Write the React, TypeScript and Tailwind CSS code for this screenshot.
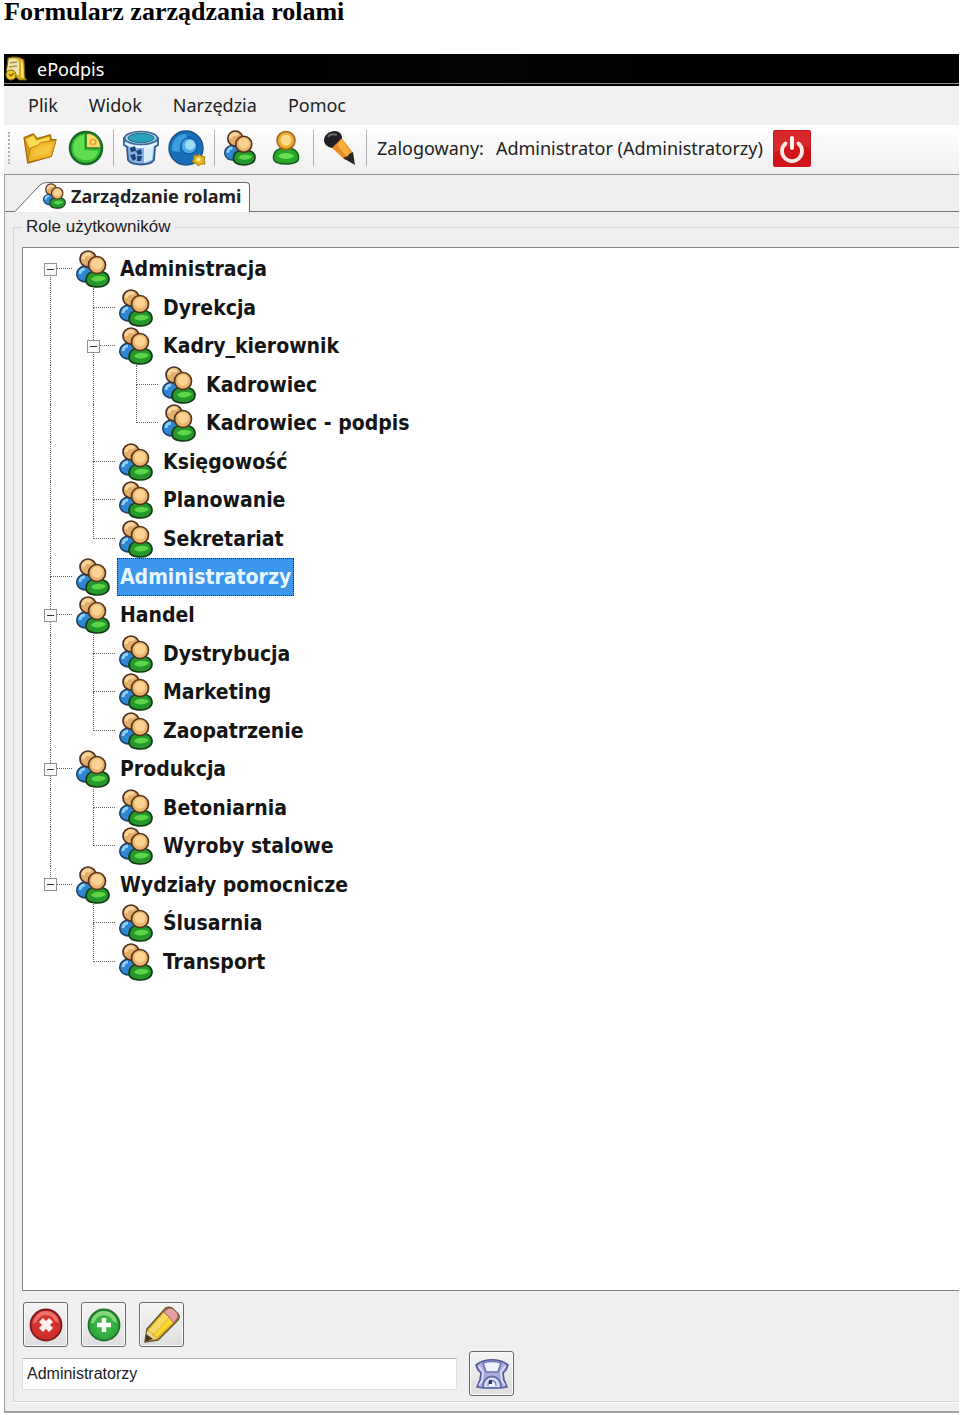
import React, { useState } from "react";

type RoleNode = { name: string; children?: RoleNode[] };

const roles: RoleNode[] = [
  {
    name: "Administracja",
    children: [
      { name: "Dyrekcja" },
      { name: "Kadry_kierownik", children: [{ name: "Kadrowiec" }, { name: "Kadrowiec - podpis" }] },
      { name: "Księgowość" },
      { name: "Planowanie" },
      { name: "Sekretariat" },
    ],
  },
  { name: "Administratorzy" },
  { name: "Handel", children: [{ name: "Dystrybucja" }, { name: "Marketing" }, { name: "Zaopatrzenie" }] },
  { name: "Produkcja", children: [{ name: "Betoniarnia" }, { name: "Wyroby stalowe" }] },
  { name: "Wydziały pomocnicze", children: [{ name: "Ślusarnia" }, { name: "Transport" }] },
];

type Row = { name: string; guides: boolean[]; first: boolean; last: boolean; parent: boolean };

// Turns the role hierarchy into rows; guides tells which ancestor lines pass through a row.
function flatten(nodes: RoleNode[], guides: boolean[] = []): Row[] {
  return nodes.flatMap((node, i) => {
    const last = i === nodes.length - 1;
    const first = i === 0 && guides.length === 0;
    return [
      { name: node.name, guides, first, last, parent: !!node.children },
      ...flatten(node.children ?? [], [...guides, !last]),
    ];
  });
}

const rows = flatten(roles);

function PeopleIcon({ className }: { className: string }) {
  return (
    <svg viewBox="0 0 34 38" className={className} aria-hidden="true">
      <path d="M1 26c-1-5 2-9 8-10l9 4v11l-7 1C6 32 2 30 1 26Z" fill="#2f86d2" stroke="#1c3f66" strokeWidth="1.500" />
      <path d="M4 24c0-3 2-5 5-5" stroke="#8fd0fb" strokeWidth="3" fill="none" />
      <circle cx="12" cy="9" r="8" fill="#e5ad69" stroke="#4a3020" strokeWidth="1.700" />
      <path d="M7 9c0-4 4-6 8-4" stroke="#f9d59c" strokeWidth="3.500" fill="none" />
      <path d="M10 30c0-6 5-9 12-9 6 0 11 3 11 8 0 5-5 8-11 8-7 0-12-2-12-7Z" fill="#25982b" stroke="#153c17" strokeWidth="1.700" />
      <path d="M15 29c3-4 11-4 15-1-3 4-11 5-15 1Z" fill="#5cd548" />
      <circle cx="21" cy="15" r="8.500" fill="#ebb36c" stroke="#543620" strokeWidth="1.700" />
      <circle cx="21" cy="14" r="5.500" fill="#fad392" />
    </svg>
  );
}

function PersonIcon() {
  return (
    <svg viewBox="0 0 28 36" className="h-9 w-7" aria-hidden="true">
      <path d="M1.500 28c0-6 4-10 12.500-10s12.500 4 12.500 10c0 4-5 6-12.500 6S1.500 32 1.500 28Z" fill="#28a72c" stroke="#17631a" strokeWidth="1.600" />
      <path d="M6 26c3-4 13-4 16 0-3 4-13 4-16 0Z" fill="#69df51" />
      <circle cx="14" cy="10.500" r="9" fill="#eba936" stroke="#a06215" strokeWidth="1.500" />
      <circle cx="14" cy="10" r="5.500" fill="#fbdc87" />
    </svg>
  );
}

function FolderIcon() {
  return (
    <svg viewBox="0 0 36 34" className="h-8 w-9" aria-hidden="true">
      <path d="M1 6 11 2l4 5 14-4 1 5 5 0-5 18L5 33Z" fill="#d89a12" stroke="#9a6a0c" strokeWidth="1.300" strokeLinejoin="round" />
      <path d="M3 8 11 4l3 5 14-4v6L7 17Z" fill="#fbdc57" />
      <path d="m8 17 8-3 3-3 16-2-5 17L5 32Z" fill="#efb92c" stroke="#b67c0c" strokeWidth="1" strokeLinejoin="round" />
      <path d="m10 26 4-9 17-4-4 10Z" fill="#f5c640" />
    </svg>
  );
}

function PieIcon() {
  return (
    <svg viewBox="0 0 36 36" className="size-9" aria-hidden="true">
      <circle cx="18" cy="18" r="16" fill="#33bd32" stroke="#196a20" strokeWidth="2.500" />
      <path d="M5 20C5 11 9 6 16 5v15l14 1C28 34 7 33 5 20Z" fill="#5fdf50" />
      <path d="M18 3v15h15C33 9 27 3 18 3Z" fill="#f1dd67" stroke="#37792a" strokeWidth="1.700" />
      <circle cx="25" cy="12" r="3.500" fill="#e9a637" />
      <circle cx="25" cy="12" r="1.500" fill="#fff1a0" />
    </svg>
  );
}

function BinIcon() {
  return (
    <svg viewBox="0 0 36 36" className="size-9" aria-hidden="true">
      <path d="M1 8v7l3 2 1 13c4 6 22 6 26 0l1-13 3-2V8Z" fill="#83b4df" stroke="#315b91" strokeWidth="1.800" />
      <path d="m21 17 10-2-2 15-8 3Z" fill="#d7edfb" />
      <ellipse cx="18" cy="8" rx="16.500" ry="6.500" fill="#a5d4e8" stroke="#3e6793" strokeWidth="1.600" />
      <ellipse cx="18" cy="8" rx="13" ry="4.500" fill="#28a2bd" stroke="#246987" strokeWidth="1" />
      <path d="M2 13c8 5 24 5 32 0" stroke="#e8f7ff" strokeWidth="2.500" fill="none" />
      <path d="m7 18 5-2 1 5-5 1Zm6 3 5-2 1 5-4 1Zm-6 4 5-1 1 5-3 2Zm7 1 5 0-1 5h-4Z" fill="#213f79" />
    </svg>
  );
}

function DiscIcon() {
  return (
    <svg viewBox="0 0 38 36" className="h-9 w-[38px]" aria-hidden="true">
      <circle cx="18" cy="18" r="17" fill="#176fb9" stroke="#1b518d" strokeWidth="1.400" />
      <path d="M4 21C3 11 9 4 18 4l2 7c-6 1-9 5-8 11Z" fill="#3b9dde" />
      <circle cx="21" cy="16" r="8" fill="#4eafe9" stroke="#145da6" strokeWidth="1.500" />
      <circle cx="22" cy="15" r="5" fill="#a0dcf7" />
      <path d="m31 24 2 2 4 1-1 3 1 4-4 0-3 2-2-3-4-1 2-3 0-4 4 1Z" fill="#e5b723" stroke="#a87808" strokeWidth="1" />
      <circle cx="30.500" cy="29.500" r="2" fill="#fff0a0" />
    </svg>
  );
}

function MarkerIcon() {
  return (
    <svg viewBox="0 0 34 36" className="h-9 w-[34px]" aria-hidden="true">
      <path d="M8 17 18 7l12 16-8 7Z" fill="#ea8c1d" />
      <path d="m14 15 5-6 9 14-4 4Z" fill="#f9ad43" />
      <path d="M1 10C1 5 6 1 12 1c4 0 7 3 7 7L9 18C4 17 1 14 1 10Z" fill="#202025" />
      <path d="M5 7c2-3 6-3 9-2" stroke="#696a73" strokeWidth="2" fill="none" />
      <path d="m20 28 5-2 1-2 4-2 2 13Z" fill="#2d2520" />
    </svg>
  );
}

function ScrollIcon() {
  return (
    <svg viewBox="0 0 24 26" className="h-[26px] w-6" aria-hidden="true">
      <path d="M4 2c5-2 13-1 16 2l1 18 2 2h-8l-3-3-6 3-4-5Z" fill="#d3aa28" stroke="#6d5412" strokeWidth="1" />
      <path d="M5 3c4-1 10-1 10 4v12H6L3 14Z" fill="#f0e4aa" />
      <path d="m6 7 7-1M5 11l8-1" stroke="#a99950" strokeWidth="1.500" />
      <path d="M17 4c3 2 2 12 3 18l-3-1Z" fill="#ffe656" />
      <circle cx="7" cy="19" r="5" fill="#edca29" stroke="#84670f" strokeWidth="1" />
      <path d="m5 18 2 2 3-3" stroke="#8d6b0a" strokeWidth="1.500" fill="none" />
    </svg>
  );
}

function PowerIcon() {
  return (
    <svg viewBox="0 0 38 37" className="h-[37px] w-[38px]" aria-hidden="true">
      <rect width="38" height="37" rx="2" fill="#cf1519" />
      <path d="M1 1h36v17C24 14 12 16 1 24Z" fill="#d8282b" />
      <path d="M12.500 13.500a10 10 0 1 0 13 0" stroke="#fce9e5" strokeWidth="3.800" fill="none" strokeLinecap="round" />
      <path d="M19 8v10" stroke="#fff4f0" strokeWidth="4" strokeLinecap="round" />
    </svg>
  );
}

function RoundIcon({ kind }: { kind: "delete" | "add" }) {
  const red = kind === "delete";
  return (
    <svg viewBox="0 0 34 34" className="size-[34px]" aria-hidden="true">
      <circle cx="17" cy="17" r="15.500" fill={red ? "#ce302b" : "#30aa3c"} stroke={red ? "#801817" : "#20702b"} strokeWidth="1.800" />
      <path d="M4 16C5 7 11 3 17 3s12 4 13 12c-7-4-18-3-26 1Z" fill={red ? "#ec7167" : "#85d77c"} />
      <circle cx="17" cy="17" r="10" fill={red ? "#d6342e" : "#39b443"} />
      {red ? (
        <path d="m12 12 10 10m0-10-10 10" stroke="#fff5ee" strokeWidth="5.500" />
      ) : (
        <path d="M17 10v14m-7-7h14" stroke="#fbfff6" strokeWidth="4.500" />
      )}
    </svg>
  );
}

function PencilIcon() {
  return (
    <svg viewBox="0 0 38 38" className="size-[38px]" aria-hidden="true">
      <path d="M2 36 4 23 21 4c2-3 5-3 8-2l6 6c2 2 1 5-1 7L15 34Z" fill="#dfb32b" stroke="#6b5522" strokeWidth="1.600" strokeLinejoin="round" />
      <path d="M6 24 21 7l5 4L11 28Z" fill="#f4d967" />
      <path d="M11 29 27 11l4 4-17 16Z" fill="#fbd82f" />
      <path d="m21 6 5-4c3-1 10 5 9 9l-4 6-4-5Z" fill="#e5a3a5" stroke="#96605c" strokeWidth="1" />
      <path d="m4 25 4 1 2 4 4 2-12 4Z" fill="#e9cf91" />
      <path d="m2 36 1-8 7 5Z" fill="#463718" />
    </svg>
  );
}

function SaveIcon() {
  return (
    <svg viewBox="0 0 34 34" className="size-[34px]" aria-hidden="true">
      <path d="M1 8C10 1 24 1 33 8l-2 5-3 3 1 7 3 7-7 1H9l-7-1 3-7 1-7-3-3Z" fill="#a9aedd" stroke="#525b96" strokeWidth="1.700" strokeLinejoin="round" />
      <path d="M8 6c5-2 13-2 18 0l-3 9H11Z" fill="#f0f2ff" stroke="#6d75b0" strokeWidth="1.600" />
      <path d="M8 30c0-14 18-14 18 0" fill="#dce0fa" stroke="#656da8" strokeWidth="2" />
      <path d="M13 29c0-7 8-7 8 0" fill="#f4f5ff" stroke="#7980bb" strokeWidth="1.300" />
      <path d="M14 23h3v4h-3Z" fill="#31376e" />
      <path d="m4 9 4 6-1 9-3 4m26-19-4 6 1 9 3 4" stroke="#e3e6fa" strokeWidth="1.500" fill="none" />
    </svg>
  );
}

function Divider() {
  return <span className="h-9 w-px bg-[#b4b4b8]" />;
}

function ToolButton({ label, className = "", children }: { label: string; className?: string; children: React.ReactNode }) {
  return (
    <button type="button" aria-label={label} className={`flex shrink-0 items-center justify-center ${className}`}>
      {children}
    </button>
  );
}

function FrameButton({ label, children }: { label: string; children: React.ReactNode }) {
  return (
    <button
      type="button"
      aria-label={label}
      className="flex size-[45px] shrink-0 items-center justify-center rounded-[3px] border border-[#69696d] bg-linear-to-b from-[#f5f5f5] to-[#dedee0] shadow-[inset_0_0_0_1px_#fafafa]"
    >
      {children}
    </button>
  );
}

function TreeRow({ row, selected, onSelect }: { row: Row; selected: boolean; onSelect: () => void }) {
  return (
    <li role="treeitem" aria-level={row.guides.length + 1} aria-selected={selected} className="flex min-h-0">
      {row.guides.map((on, i) => (
        <span key={i} className="grid w-[43px] shrink-0 grid-cols-[21px_22px]">
          <span className={`col-start-2 border-dotted border-[#666] ${on ? "border-l" : ""}`} />
        </span>
      ))}
      <span className="grid w-[43px] shrink-0 grid-cols-[21px_22px] grid-rows-2">
        <span className={`col-start-2 row-start-1 border-b border-dotted border-[#666] ${row.first ? "" : "border-l"}`} />
        <span className={`col-start-2 row-start-2 border-dotted border-[#666] ${row.last ? "" : "border-l"}`} />
        {row.parent && (
          <button
            type="button"
            aria-label={`Zwiń ${row.name}`}
            className="col-span-2 col-start-1 row-span-2 row-start-1 flex size-[13px] items-center justify-center place-self-center border border-[#929292] bg-[#fafafa]"
          >
            <span className="h-px w-[7px] bg-[#333]" />
          </button>
        )}
      </span>
      <span className="flex w-[43px] shrink-0 items-center pl-1">
        <PeopleIcon className="h-[38px] w-[34px]" />
      </span>
      <button
        type="button"
        onClick={onSelect}
        className={`ml-[2px] flex items-center border border-dotted px-[2px] text-[21px] leading-6 font-bold whitespace-nowrap ${
          selected ? "border-[#26303c] bg-[#3b96ec] text-[#e6f8ff]" : "border-transparent text-[#151515]"
        }`}
      >
        {row.name}
      </button>
    </li>
  );
}

export default function App() {
  const [selected, setSelected] = useState("Administratorzy");
  return (
    <main className="flex min-h-screen flex-col bg-white pr-px pb-[2px] pl-1 font-['Noto_Sans',sans-serif] text-[#222]">
      <h1 className="h-[54px] font-['Liberation_Serif',serif] text-[26px] leading-6 font-bold whitespace-nowrap text-black">
        Formularz zarządzania rolami
      </h1>

      <section className="flex grow flex-col bg-[#efefef]">
        <header className="flex h-8 items-center gap-[9px] border-b-2 border-black bg-linear-to-r from-black via-[#050505] to-black shadow-[inset_0_-1px_0_#888]">
          <ScrollIcon />
          <span className="text-[18px] leading-6 text-white">ePodpis</span>
        </header>

        <nav className="flex h-[39px] items-center gap-[31px] bg-[#f1f1f1] pl-6 text-[18px]">
          <button type="button">Plik</button>
          <button type="button">Widok</button>
          <button type="button">Narzędzia</button>
          <button type="button">Pomoc</button>
        </nav>

        <div className="flex h-[50px] items-center border-b border-[#929292] bg-linear-to-b from-white to-[#efefef] pb-[3px] pl-1">
          <span className="h-8 border-l-2 border-dotted border-[#b9b5a6]" />
          <ToolButton label="Otwórz" className="ml-3"><FolderIcon /></ToolButton>
          <ToolButton label="Statystyki" className="mr-[9px] ml-[10px]"><PieIcon /></ToolButton>
          <Divider />
          <ToolButton label="Kosz" className="ml-[9px]"><BinIcon /></ToolButton>
          <ToolButton label="Ustawienia" className="mr-2 ml-[9px]"><DiscIcon /></ToolButton>
          <Divider />
          <ToolButton label="Role" className="ml-[9px]"><PeopleIcon className="h-9 w-8" /></ToolButton>
          <ToolButton label="Użytkownicy" className="mr-[13px] ml-4"><PersonIcon /></ToolButton>
          <Divider />
          <ToolButton label="Podpis" className="mr-[9px] ml-[9px]"><MarkerIcon /></ToolButton>
          <Divider />
          <span className="ml-[10px] flex gap-3 text-[18px] whitespace-nowrap">
            <span>Zalogowany:</span>
            <span>Administrator (Administratorzy)</span>
          </span>
          <ToolButton label="Wyloguj" className="ml-[10px]"><PowerIcon /></ToolButton>
        </div>

        <div className="flex grow flex-col border-b-2 border-l border-[#a2a2a2]">
          <div role="tablist" className="flex h-[37px] items-end">
            <span className="w-[10px] self-stretch border-b border-[#777]" />
            <svg viewBox="0 0 32 30" className="h-[30px] w-8 shrink-0" aria-hidden="true">
              <path d="M0 29.500 25 3q3-2.500 7-2.500V30H0Z" fill="#fff" />
              <path d="M0 29.500 25 3q3-2.500 7-2.500" fill="none" stroke="#666" />
            </svg>
            <button
              type="button"
              role="tab"
              aria-selected="true"
              className="flex h-[30px] items-center gap-[5px] rounded-tr-[4px] border-t border-r border-[#666] bg-white pr-2 pb-[3px] text-[18px] font-bold whitespace-nowrap"
            >
              <PeopleIcon className="-ml-1 h-[26px] w-[23px]" />
              Zarządzanie rolami
            </button>
            <span className="grow self-stretch border-b border-[#777]" />
          </div>

          <fieldset className="mt-[5px] mb-[9px] ml-2 min-w-0 border-y border-l border-[#d5d5d5] pt-[10px] pb-[5px] pl-2 shadow-[0_1px_0_#fff]">
            <legend className="px-1 font-['Liberation_Sans',sans-serif] text-[17px] leading-5">Role użytkowników</legend>
            <div className="min-h-[1044px] border-y border-l border-[#858585] bg-white pt-[2px] pl-[6px]">
              <ul role="tree" aria-label="Role użytkowników" className="grid h-[731px] auto-rows-fr font-['DejaVu_Sans_Condensed','DejaVu_Sans',sans-serif]">
                {rows.map((row) => (
                  <TreeRow key={row.name} row={row} selected={row.name === selected} onSelect={() => setSelected(row.name)} />
                ))}
              </ul>
            </div>

            <div className="mt-[11px] flex gap-[13px] pl-px">
              <FrameButton label="Usuń rolę"><RoundIcon kind="delete" /></FrameButton>
              <FrameButton label="Dodaj rolę"><RoundIcon kind="add" /></FrameButton>
              <FrameButton label="Edytuj rolę"><PencilIcon /></FrameButton>
            </div>

            <div className="mt-1 flex items-center gap-3">
              <input
                aria-label="Nazwa roli"
                value={selected}
                onChange={(e) => setSelected(e.target.value)}
                className="h-8 w-[435px] border border-[#e0e0e0] border-t-[#b5b5b5] bg-white px-1 font-['Liberation_Sans',sans-serif] text-[16px]"
              />
              <FrameButton label="Zapisz"><SaveIcon /></FrameButton>
            </div>
          </fieldset>
        </div>
      </section>
    </main>
  );
}
